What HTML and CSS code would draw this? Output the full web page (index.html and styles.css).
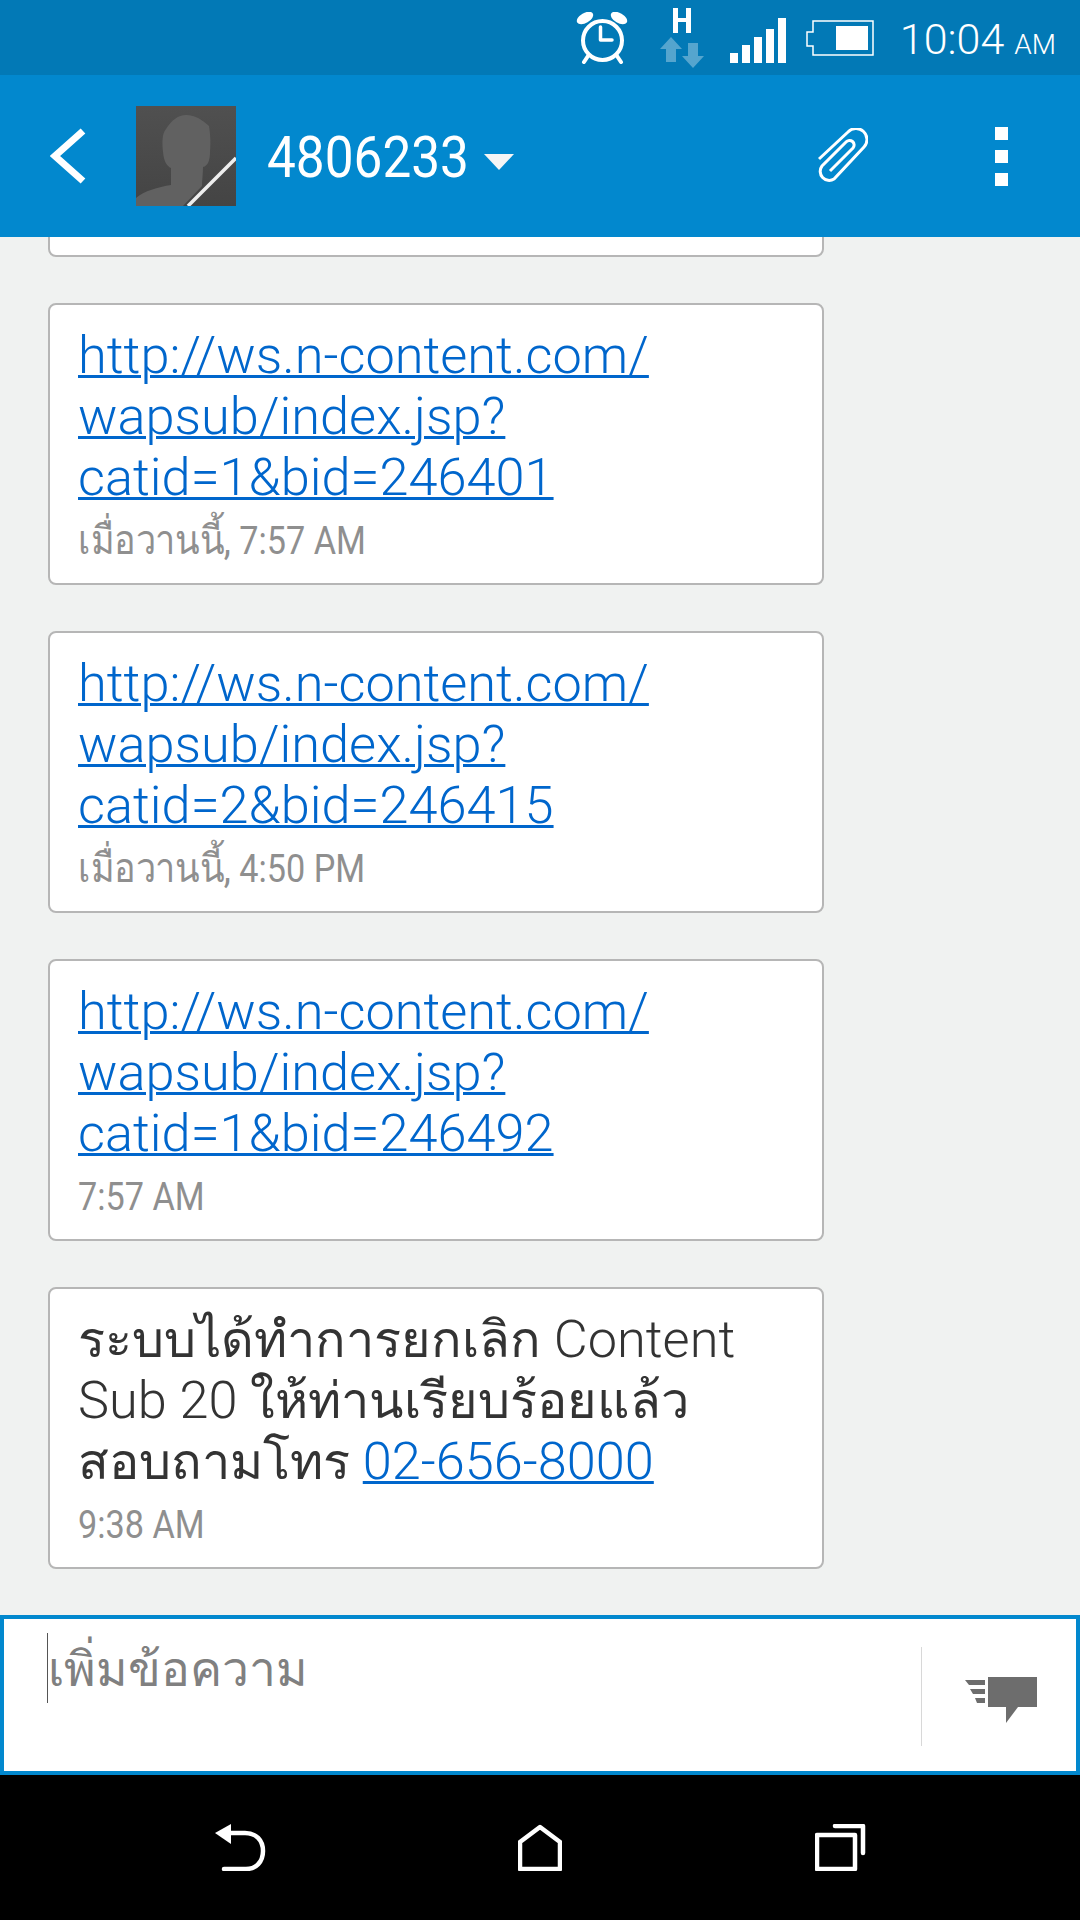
FILE: index.html
```html
<!DOCTYPE html>
<html lang="en">
<head>
    <meta charset="UTF-8">
    <title>4806233</title>
    <link rel="stylesheet" href="styles.css">
</head>
<body>
    <div class="phone">
        <div class="status-bar">
            <svg class="alarm-icon" width="52" height="52" viewBox="0 0 52 52" fill="none" stroke="#fff">
                <circle cx="26.5" cy="28.5" r="19.5" stroke-width="4"/>
                <path d="M24.5 15v13H36" stroke-width="3.5" stroke-linecap="round" stroke-linejoin="round"/>
                <path d="M12 44l-4 6M41 44l4 6" stroke-width="4" stroke-linecap="round"/>
                <ellipse cx="9" cy="6" rx="9" ry="5" transform="rotate(-30 9 6)" fill="#fff" stroke="none"/>
                <ellipse cx="43" cy="6" rx="9" ry="5" transform="rotate(30 43 6)" fill="#fff" stroke="none"/>
            </svg>
            <svg class="net-icon" width="44" height="60" viewBox="0 0 44 60">
                <path d="M13 0h5v10h8V0h5v25h-5V14h-8v11h-5Z" fill="#fff"/>
                <path d="M11 29l11 12h-6v13H6V41H0Z M33 60L22 48h6V35h10v13h6Z" fill="#fff" opacity="0.33"/>
            </svg>
            <svg class="signal-icon" width="56" height="45" viewBox="0 0 56 45" fill="#fff">
                <rect x="0" y="35" width="8" height="10"/>
                <rect x="12" y="27" width="8" height="18"/>
                <rect x="24" y="19" width="8" height="26"/>
                <rect x="36" y="11" width="8" height="34"/>
                <rect x="48" y="0" width="8" height="45"/>
            </svg>
            <svg class="battery-icon" width="68" height="36" viewBox="0 0 68 36">
                <path d="M7 1h60v34H7V26H1V12h6Z" fill="none" stroke="#fff" stroke-width="1.5"/>
                <rect x="30" y="6" width="32" height="24" fill="#fff"/>
            </svg>
            <div class="clock">10:04<span class="clock-ampm">AM</span></div>
        </div>

        <div class="app-bar">
            <svg class="back-icon" width="36" height="56" viewBox="0 0 36 56" fill="none" stroke="#fff" stroke-width="7">
                <path d="M33 3L5 28l28 25"/>
            </svg>
            <svg class="avatar" width="100" height="100" viewBox="0 0 100 100">
                <defs>
                    <linearGradient id="avatarBg" x1="0" y1="0" x2="0" y2="1">
                        <stop offset="0" stop-color="#505050"/>
                        <stop offset="1" stop-color="#444"/>
                    </linearGradient>
                </defs>
                <rect width="100" height="100" fill="url(#avatarBg)"/>
                <path d="M50 9C60 9 66 14 73 20C74 27 75 34 74 46C74 54 72 60 67 61C67 68 66 74 66 80L47 100H0V92C8 85 22 81 35 79V62C31 60 28 56 27 46C26 36 26 28 30 23C36 14 42 9 50 9Z" fill="#616161"/>
                <path d="M100 52L52 100" stroke="#eee" stroke-width="3.5"/>
            </svg>
            <div class="contact-name">4806233</div>
            <div class="caret-down"></div>
            <svg class="clip-icon" width="50" height="56" viewBox="0 0 50 56" fill="none" stroke="#fff" stroke-width="3">
                <path d="M1 31L30 4A10.5 10.5 0 0 1 46 19L16 51A9 9 0 0 1 4 38L28 14A4.5 4.5 0 0 1 35 20L12 43"/>
            </svg>
            <div class="menu-dots">
                <span></span>
                <span></span>
                <span></span>
            </div>
        </div>

        <div class="messages">
            <div class="bubble"></div>
            <div class="bubble">
                <a class="msg-text link" href="#">http://ws.n-content.com/<br>wapsub/index.jsp?<br>catid=1&amp;bid=246401</a>
                <div class="msg-time"><span class="time-day">เมื่อวานนี้,</span> 7:57 AM</div>
            </div>
            <div class="bubble">
                <a class="msg-text link" href="#">http://ws.n-content.com/<br>wapsub/index.jsp?<br>catid=2&amp;bid=246415</a>
                <div class="msg-time"><span class="time-day">เมื่อวานนี้,</span> 4:50 PM</div>
            </div>
            <div class="bubble">
                <a class="msg-text link" href="#">http://ws.n-content.com/<br>wapsub/index.jsp?<br>catid=1&amp;bid=246492</a>
                <div class="msg-time">7:57 AM</div>
            </div>
            <div class="bubble">
                <div class="msg-text"><span class="thai">ระบบได้ทำการยกเลิก</span> Content<br>Sub 20 <span class="thai">ให้ท่านเรียบร้อยแล้ว</span><br><span class="thai">สอบถามโทร</span> <a class="link" href="#">02-656-8000</a></div>
                <div class="msg-time">9:38 AM</div>
            </div>
        </div>

        <div class="composer">
            <div class="composer-input">
                <span class="text-caret"></span>
                <span class="placeholder">เพิ่มข้อความ</span>
            </div>
            <div class="composer-send">
                <svg width="72" height="46" viewBox="0 0 72 46" fill="#6d6d6d">
                    <path d="M23 0H72V30H53L41 46V30H23Z"/>
                    <path d="M0 3H20V8H4Z M5 12H20V17H8Z M10 21H20V26H12Z"/>
                </svg>
            </div>
        </div>

        <div class="nav-bar">
            <svg width="51" height="47" viewBox="0 0 51 47" fill="none" stroke="#fff" stroke-width="4.5">
                <path d="M12 9H30C41 9 48 16 48 27C48 38 41 45 31 45H9" stroke-linecap="round"/>
                <path d="M16 0V20L0 9Z" fill="#fff" stroke="none"/>
            </svg>
            <svg width="44" height="47" viewBox="0 0 44 47" fill="none" stroke="#fff" stroke-width="4.5" stroke-linejoin="round">
                <path d="M22 3L42 18V45H2V18Z"/>
            </svg>
            <svg width="51" height="47" viewBox="0 0 51 47" fill="none" stroke="#fff" stroke-width="4.5" stroke-linejoin="round" stroke-linecap="round">
                <rect x="2" y="11" width="38" height="34"/>
                <path d="M20 2H48V29"/>
            </svg>
        </div>
    </div>
</body>
</html>
```

FILE: styles.css
```css
html, body {
    margin: 0;
    padding: 0;
}
body {
    font-family: Roboto, "Noto Sans", "DejaVu Sans", sans-serif;
    background-color: #000;
}
.phone {
    width: 1080px;
    height: 1920px;
    display: flex;
    flex-direction: column;
    overflow: hidden;
}

/* status bar */
.status-bar {
    height: 75px;
    flex: none;
    background-color: #0279b6;
    display: flex;
    align-items: center;
    justify-content: flex-end;
    padding-right: 24px;
    box-sizing: border-box;
}
.alarm-icon {
    margin-top: 1px;
}
.net-icon {
    margin-left: 32px;
    margin-top: 1px;
}
.signal-icon {
    margin-left: 26px;
    margin-top: 6px;
}
.battery-icon {
    margin-left: 20px;
}
.clock {
    margin-left: 26px;
    margin-top: 4px;
    color: #fff;
    font-weight: 300;
    font-size: 43px;
    line-height: 1;
}
.clock-ampm {
    font-size: 28px;
    margin-left: 10px;
}

/* app bar */
.app-bar {
    height: 162px;
    flex: none;
    background-color: #0288ce;
    display: flex;
    align-items: center;
    padding-left: 50px;
}
.avatar {
    margin-left: 50px;
}
.contact-name {
    width: 201px;
    margin-left: 31px;
    margin-top: 2px;
    color: #fff;
    font-size: 58px;
    white-space: nowrap;
    transform: scaleX(0.885);
    transform-origin: left center;
}
.caret-down {
    margin-left: 16px;
    margin-top: 12px;
    border-left: 15px solid transparent;
    border-right: 15px solid transparent;
    border-top: 16px solid #f5f5f5;
}
.clip-icon {
    margin-left: auto;
    margin-right: 127px;
}
.menu-dots {
    display: flex;
    flex-direction: column;
    gap: 10px;
    margin-right: 72px;
}
.menu-dots span {
    display: block;
    width: 13px;
    height: 13px;
    background-color: #fff;
}

/* messages */
.messages {
    flex: 1;
    min-height: 0;
    overflow: hidden;
    background-color: #f0f2f1;
    display: flex;
    flex-direction: column;
    justify-content: flex-end;
    gap: 46px;
    padding: 0 0 46px 48px;
}
.bubble {
    flex: none;
    width: 776px;
    height: 282px;
    box-sizing: border-box;
    background: white;
    border: 2px solid #b6b6b6;
    border-radius: 8px;
    padding: 20px 28px 0;
}
.msg-text {
    display: block;
    font-size: 52.3px;
    font-weight: 300;
    line-height: 61px;
    color: #333;
}
.thai {
    font-size: 50.5px;
}
.link {
    color: #0066cc;
    text-decoration: underline;
    text-decoration-thickness: 3px;
}
.msg-time {
    margin-top: 10px;
    font-size: 38px;
    line-height: 46px;
    color: #8f8f8f;
    white-space: nowrap;
    transform: scaleX(0.9);
    transform-origin: left center;
}
.time-day {
    font-size: 40px;
}

/* composer */
.composer {
    height: 160px;
    flex: none;
    box-sizing: border-box;
    background: white;
    border: 4px solid #0288ce;
    display: flex;
}
.composer-input {
    flex: 1;
    display: flex;
    align-items: flex-start;
    padding: 14px 0 0 43px;
}
.text-caret {
    width: 1px;
    height: 70px;
    background-color: #555;
}
.placeholder {
    font-size: 48px;
    line-height: 74px;
    color: #808080;
}
.composer-send {
    width: 155px;
    margin: 28px 0 25px;
    border-left: 1px solid #d8d8d8;
    padding: 30px 0 0 43px;
    box-sizing: border-box;
}

/* nav bar */
.nav-bar {
    height: 145px;
    flex: none;
    background-color: #000;
    display: grid;
    grid-template-columns: repeat(3, 1fr);
    justify-items: center;
    align-items: center;
    padding: 0 90px;
}
```
